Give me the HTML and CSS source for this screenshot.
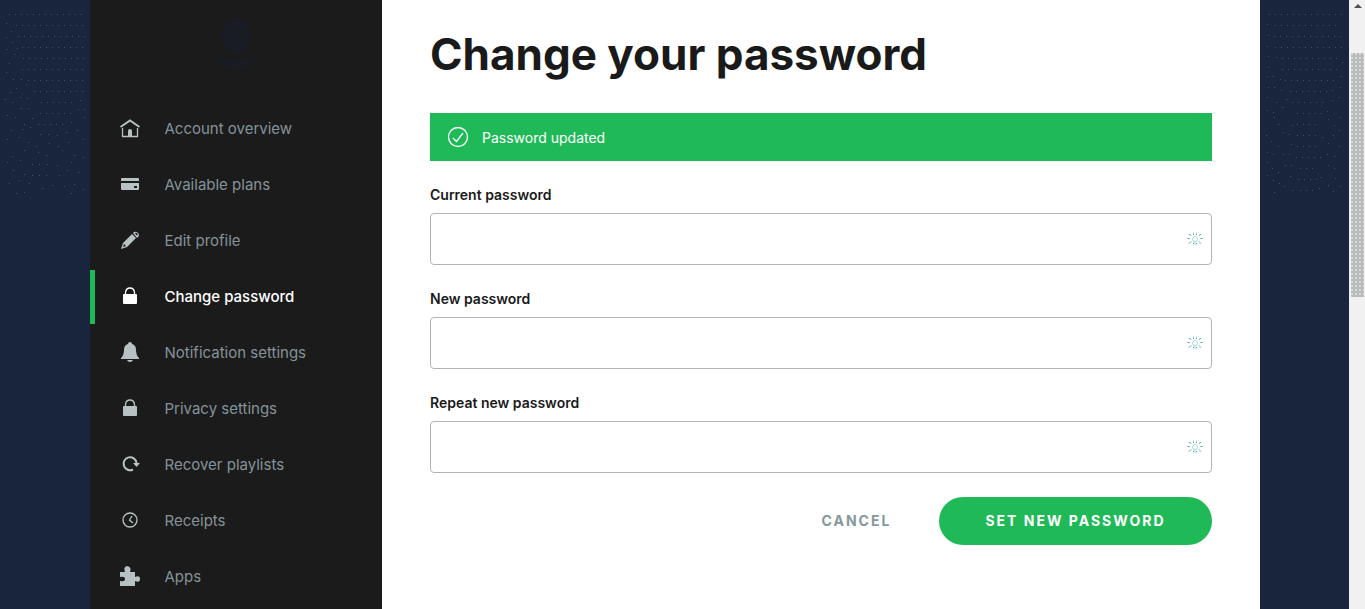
FILE: index.html
```html
<!DOCTYPE html>
<html lang="en">
<head>
<meta charset="utf-8">
<meta name="viewport" content="width=device-width, initial-scale=1">
<title>Change your password</title>
<link rel="stylesheet" href="styles.css">
</head>
<body>
<div class="page">
  <div class="side">
    <svg class="dots" width="90" height="200" viewBox="0 0 90 200" aria-hidden="true">
      <path class="dots-row" d="M9 14.500H84M16 25.500H84M18 36.500H87M22 47.500H84M23 58.500H84M22 69.500H84M28 80.500H84M34 91.500H84M41 102.500H73M40 113.500H71M38 124.500H63"/>
      <path class="dots-free" d="M6 23.500h1M6 37.500h1M11 31.500h1M12 42.500h1M17 48.500h1M6 49.500h1M14 54.500h1M9 63.500h1M6 72.500h1M13 79.500h1M21 79.500h1M26 84.500h1M16 88.500h1M10 92.500h1M5 99.500h1M20 97.500h1M27 98.500h1M12 102.500h1M80 100.500h1M21 108.500h1M28 108.500h1M78 109.500h1M84 109.500h1M7 115.500h1M15 117.500h1M32 118.500h1M24 124.500h1M71 122.500h1M84 117.500h1M11 130.500h1M22 129.500h1M30 127.500h1M40 134.500h1M48 134.500h1M57 135.500h1M66 132.500h1M77 130.500h1M7 139.500h1M19 137.500h1M28 142.500h1M36 146.500h1M49 143.500h1M58 146.500h1M68 142.500h1M83 139.500h1M12 156.500h1M24 150.500h1M38 152.500h1M46 155.500h1M62 150.500h1M74 155.500h1M83 157.500h1M7 162.500h1M20 160.500h1M32 164.500h1M39 164.500h1M47 164.500h1M57 165.500h1M71 162.500h1M13 170.500h1M24 174.500h1M32 175.500h1M39 175.500h1M46 175.500h1M59 175.500h1M67 170.500h1M78 172.500h1M9 183.500h1M19 180.500h1M29 183.500h1M42 188.500h1M52 185.500h1M64 186.500h1M74 184.500h1M83 189.500h1M16 193.500h1M24 192.500h1M71 193.500h1"/>
    </svg>
  </div>
  <div class="shell">
    <nav class="sidebar" aria-label="Account">
      <svg class="avatar" viewBox="0 0 48 56" aria-hidden="true"><ellipse cx="24" cy="18" rx="15" ry="18"/><path d="M3 38q21 8 42 0q-4 13-21 14Q8 51 3 38z"/></svg>
      <ul class="menu">
        <li><a class="item" href="#"><svg class="icon" viewBox="0 0 20 20"><path d="M.5 9 10 2.500 19.500 9" class="line thick"/><path d="M2.500 10v8.500h15V10" class="line"/><path d="M8 18v-5q0-2 2-2t2 2v5z"/></svg>Account overview</a></li>
        <li><a class="item" href="#"><svg class="icon" viewBox="0 0 20 20"><path d="M1 5q0-1 1-1h16q1 0 1 1v2H1zM1 9h18v6q0 1-1 1H2q-1 0-1-1z"/><path class="hole" d="M14 12h3v2h-3z"/></svg>Available plans</a></li>
        <li><a class="item" href="#"><svg class="icon" viewBox="0 0 20 20"><path d="M1 19 3 13 12 4l4 4-9 9zM13 3l1-1q2-1 4 1t0 4l-1 1z"/><path class="hole" d="m3 17 1-3 2 2zM15 3.500l1-1 2 2-1 1z"/></svg>Edit profile</a></li>
        <li><a class="item active" href="#" aria-current="page"><svg class="icon" viewBox="0 0 20 20"><path d="M4 8h12q1 0 1 1v8q0 1-1 1H4q-1 0-1-1V9q0-1 1-1z"/><path class="line" d="M5.500 9V6.500Q6 2 10 2t4.500 4.500V9"/></svg>Change password</a></li>
        <li><a class="item" href="#"><svg class="icon" viewBox="0 0 20 20"><path d="M8 2q0-2 2-2t2 2q4 1 4 6 0 5 3 8v1H1v-1q3-3 3-8 0-5 4-6zM7 18h6q-1 2-3 2t-3-2z"/></svg>Notification settings</a></li>
        <li><a class="item" href="#"><svg class="icon" viewBox="0 0 20 20"><path d="M4 8h12q1 0 1 1v8q0 1-1 1H4q-1 0-1-1V9q0-1 1-1z"/><path class="line" d="M5.500 9V6.500Q6 2 10 2t4.500 4.500V9"/></svg>Privacy settings</a></li>
        <li><a class="item" href="#"><svg class="icon" viewBox="0 0 20 20"><path class="line thick" d="M13 15.500A6.500 6.500 0 1 1 16.500 9"/><path d="M13 9h7l-3.500 4z"/></svg>Recover playlists</a></li>
        <li><a class="item" href="#"><svg class="icon" viewBox="0 0 20 20"><circle class="line" cx="10" cy="10" r="7"/><path class="line" d="m12 6-2.500 4 3.500 3"/></svg>Receipts</a></li>
        <li><a class="item" href="#"><svg class="icon" viewBox="0 0 20 20"><path d="M0 6h5q-2-5 2-6 5 1 3 6h5v5q5-2 5 2t-5 2v5H0v-5q5 1 5-2t-5-2z"/></svg>Apps</a></li>
      </ul>
    </nav>
    <main class="content">
      <h1 class="title">Change your password</h1>
      <div class="alert" role="status"><svg class="check" viewBox="0 0 22 22" aria-hidden="true"><circle cx="11" cy="11" r="9.500"/><path d="m6 12 3.500 3.500L16 7"/></svg>Password updated</div>
      <form class="form">
        <div class="field"><label class="label" for="current">Current password</label><div class="control"><input class="input" id="current" type="password"><svg class="key" viewBox="0 0 16 16" aria-hidden="true"><circle cx="8" cy="8" r="2.500"/><path class="pale" d="M7 10v4M9 10v4M6 1l.5 2M10 1l-.5 2"/><path d="M.5 7.500h2M13.500 7.500h2M2 3l2 1.500M14 3l-2 1.500M2 12.500l2-2M14 12.500l-2-2M6.500 12v1M9.500 12v1M6.500 3v1M9.500 3v1"/></svg></div></div>
        <div class="field"><label class="label" for="new">New password</label><div class="control"><input class="input" id="new" type="password"><svg class="key" viewBox="0 0 16 16" aria-hidden="true"><circle cx="8" cy="8" r="2.500"/><path class="pale" d="M7 10v4M9 10v4M6 1l.5 2M10 1l-.5 2"/><path d="M.5 7.500h2M13.500 7.500h2M2 3l2 1.500M14 3l-2 1.500M2 12.500l2-2M14 12.500l-2-2M6.500 12v1M9.500 12v1M6.500 3v1M9.500 3v1"/></svg></div></div>
        <div class="field"><label class="label" for="repeat">Repeat new password</label><div class="control"><input class="input" id="repeat" type="password"><svg class="key" viewBox="0 0 16 16" aria-hidden="true"><circle cx="8" cy="8" r="2.500"/><path class="pale" d="M7 10v4M9 10v4M6 1l.5 2M10 1l-.5 2"/><path d="M.5 7.500h2M13.500 7.500h2M2 3l2 1.500M14 3l-2 1.500M2 12.500l2-2M14 12.500l-2-2M6.500 12v1M9.500 12v1M6.500 3v1M9.500 3v1"/></svg></div></div>
        <div class="actions"><a class="cancel" href="#">CANCEL</a><button class="submit" type="submit">SET NEW PASSWORD</button></div>
      </form>
    </main>
  </div>
  <div class="side">
    <svg class="dots" width="89" height="200" viewBox="0 0 89 200" aria-hidden="true">
      <path class="dots-row" d="M9 14.500H82M15 25.500H77M14 36.500H84M15 47.500H84M22 58.500H78M22 69.500H78M25 80.500H76M30 91.500H69M32 102.500H64M37 113.500H63M37 124.500H57M37 135.500H57M37 146.500H57M36 157.500H62M40 168.500H58M38 179.500H58M40 190.500H54"/>
      <path class="dots-free" d="M7 24.500h1M8 35.500h1M7 46.500h1M8 56.500h1M16 57.500h1M82 62.500h1M8 67.500h1M7 76.500h1M13 76.500h1M20 79.500h1M81 76.500h1M8 87.500h1M14 87.500h1M21 90.500h1M80 87.500h1M72 90.500h1M7 97.500h1M16 102.500h1M26 99.500h1M79 97.500h1M72 100.500h1M7 110.500h1M13 112.500h1M22 107.500h1M67 111.500h1M80 117.500h1M14 117.500h1M18 124.500h1M32 125.500h1M68 119.500h1M74 125.500h1M6 135.500h1M23 132.500h1M29 134.500h1M79 130.500h1M73 135.500h1M62 137.500h1M11 141.500h1M18 146.500h1M31 144.500h1M68 143.500h1M79 146.500h1M7 152.500h1M13 154.500h1M23 154.500h1M29 154.500h1M67 154.500h1M74 156.500h1M7 162.500h1M12 168.500h1M25 165.500h1M31 165.500h1M68 165.500h1M74 168.500h1M7 175.500h1M18 172.500h1M30 176.500h1M61 177.500h1M75 178.500h1M13 180.500h1M19 183.500h1M24 186.500h1M32 190.500h1M59 188.500h1M68 185.500h1M80 186.500h1M14 192.500h1M73 191.500h1"/>
    </svg>
  </div>
  <div class="scrollbar" aria-hidden="true"><svg class="arrow" viewBox="0 0 8 4"><path d="M4 0 8 4H0z"/></svg><div class="thumb"></div></div>
</div>
</body>
</html>
```
FILE: styles.css
```css
* { box-sizing: border-box; }
body {
  margin: 0;
  background: #18253c;
  color: #1a1a1a;
  font-family: Inter, "Liberation Sans", sans-serif;
  overflow: hidden;
}
.page { display: flex; height: 100vh; }
.side { flex: 1 1 0; overflow: hidden; }
.dots { display: block; fill: none; stroke: #44536a; }
.dots-row { stroke-dasharray: 1 5; }
.shell { display: flex; flex: 0 1 1170px; min-width: 0; }

.sidebar { flex: 0 0 25%; background: #1b1b1b; padding-top: 18px; }
.avatar { display: block; width: 48px; height: 56px; margin: 0 auto 28px; fill: #1a1c24; }
.menu { list-style: none; margin: 0; padding: 0; display: grid; gap: 2px; }
.item {
  display: flex;
  align-items: center;
  gap: 25px;
  height: 54px;
  padding: 0 0 2px 25px;
  border-left: 5px solid transparent;
  color: #84939a;
  font-size: 15px;
  text-decoration: none;
  white-space: nowrap;
}
.item.active { border-color: #1fba57; color: #fff; font-weight: 500; }
.icon { flex: none; width: 20px; height: 20px; fill: #b9c2c2; stroke: none; }
.icon .line { fill: none; stroke: #b9c2c2; stroke-width: 1.3; }
.icon .thick { stroke-width: 2; }
.icon .hole { fill: #1b1b1b; }
.active .icon { fill: #fff; }
.active .icon .line { stroke: #fff; }

.content { flex: 1; min-width: 0; background: #fff; padding: 24px 48px; }
.title { margin: 0 0 29px; font-size: 44px; line-height: 60px; font-weight: 700; }
.alert {
  display: flex;
  align-items: center;
  gap: 13px;
  height: 48px;
  padding: 0 17px;
  background: #1fba57;
  color: #fff;
  font-size: 14px;
}
.check { width: 22px; height: 22px; fill: none; stroke: #fff; stroke-width: 1.3; }
.form { display: grid; gap: 24px; padding-top: 24px; }
.field { display: grid; gap: 8px; }
.label { font-size: 14px; line-height: 20px; font-weight: 600; }
.control { position: relative; }
.input {
  display: block;
  width: 100%;
  height: 52px;
  padding: 0 40px 0 16px;
  border: 1px solid #b3b3b3;
  border-radius: 4px;
  background: #fff;
  font: inherit;
}
.key {
  position: absolute;
  right: 9px;
  top: 18px;
  width: 16px;
  height: 16px;
  fill: none;
  stroke: #4b9cb4;
}
.key circle, .key .pale { stroke: #b5dcec; }
.actions { display: flex; justify-content: flex-end; align-items: center; gap: 48px; }
.cancel, .submit { font-size: 14px; font-weight: 700; letter-spacing: 2px; padding-bottom: 2px; }
.cancel { color: #84989a; text-decoration: none; }
.submit {
  height: 48px;
  padding: 0 46px 2px;
  border: 0;
  border-radius: 24px;
  background: #1fba57;
  color: #fff;
  font-family: inherit;
}

.scrollbar { flex: 0 0 16px; background: #f1f1f1; padding: 4px 1px 0 2px; }
.arrow { display: block; width: 8px; height: 4px; margin: 0 auto 45px; fill: #505050; }
.thumb {
  height: 244px;
  background: radial-gradient(circle at 1px 1px, #d8d8d8 1px, transparent 1px) 0 0 / 4px 4px, #b9bbbb;
}
```
